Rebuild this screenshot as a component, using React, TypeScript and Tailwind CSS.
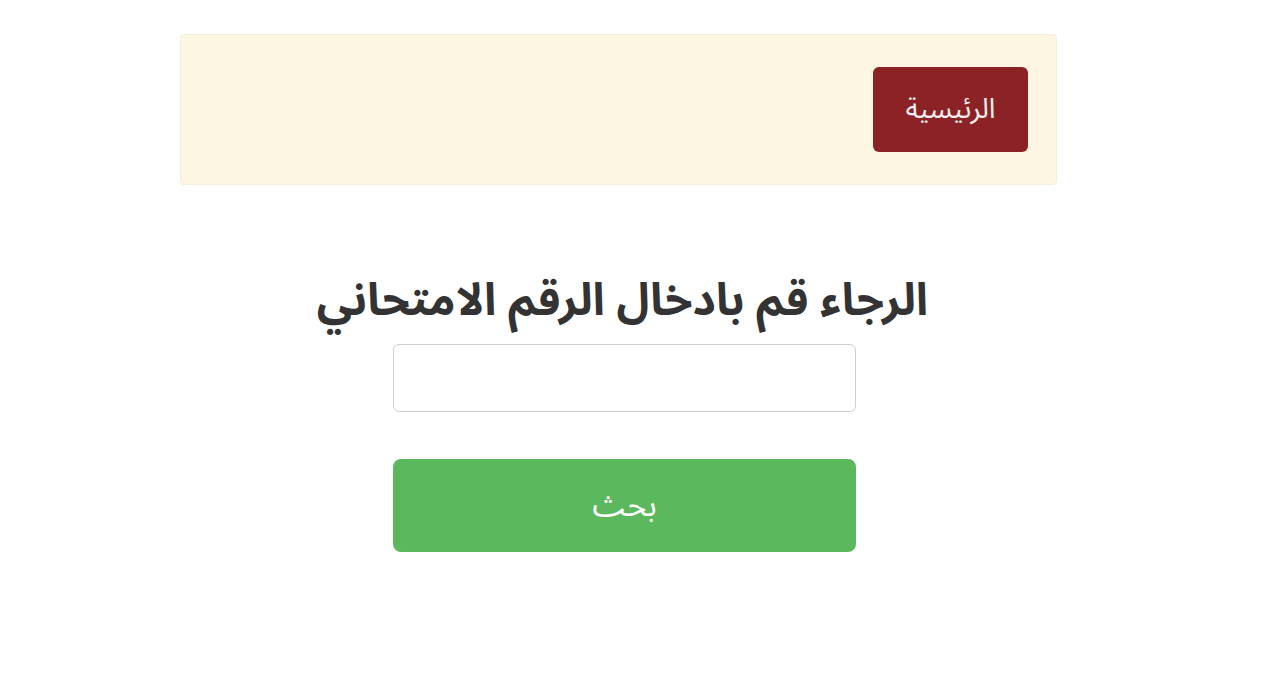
export default function App() {
  return (
    <div
      dir="rtl"
      className="min-h-[700px] bg-white pt-[34px]"
      style={{ fontFamily: '"Noto Sans Arabic", "DejaVu Sans", sans-serif' }}
    >
      <div className="mr-[223px] w-[877px]">
        <div className="flex h-[151px] items-center rounded-[4px] border border-[#f6efdc] bg-[#fdf6e3] pr-[28px]">
          <button
            type="button"
            className="flex h-[85px] w-[155px] items-center justify-center rounded-[6px] bg-[#8b2226] text-[28px] text-[#fbeeee]"
          >
            الرئيسية
          </button>
        </div>

        <div className="flex flex-col items-center pl-[8px] pt-[84px]">
          <h1 className="text-[45px] font-bold leading-[64px] text-[#333]">الرجاء قم بادخال الرقم الامتحاني</h1>
          <input
            type="text"
            className="ml-[4px] mt-[11px] h-[68px] w-[463px] rounded-[6px] border border-[#cfcfcf] bg-white px-3 text-[24px] outline-none"
          />
          <button
            type="button"
            className="ml-[4px] mt-[47px] flex h-[93px] w-[463px] items-center justify-center rounded-[8px] bg-[#5cb85c] text-[32px] text-white"
          >
            بحث
          </button>
        </div>
      </div>
    </div>
  )
}
